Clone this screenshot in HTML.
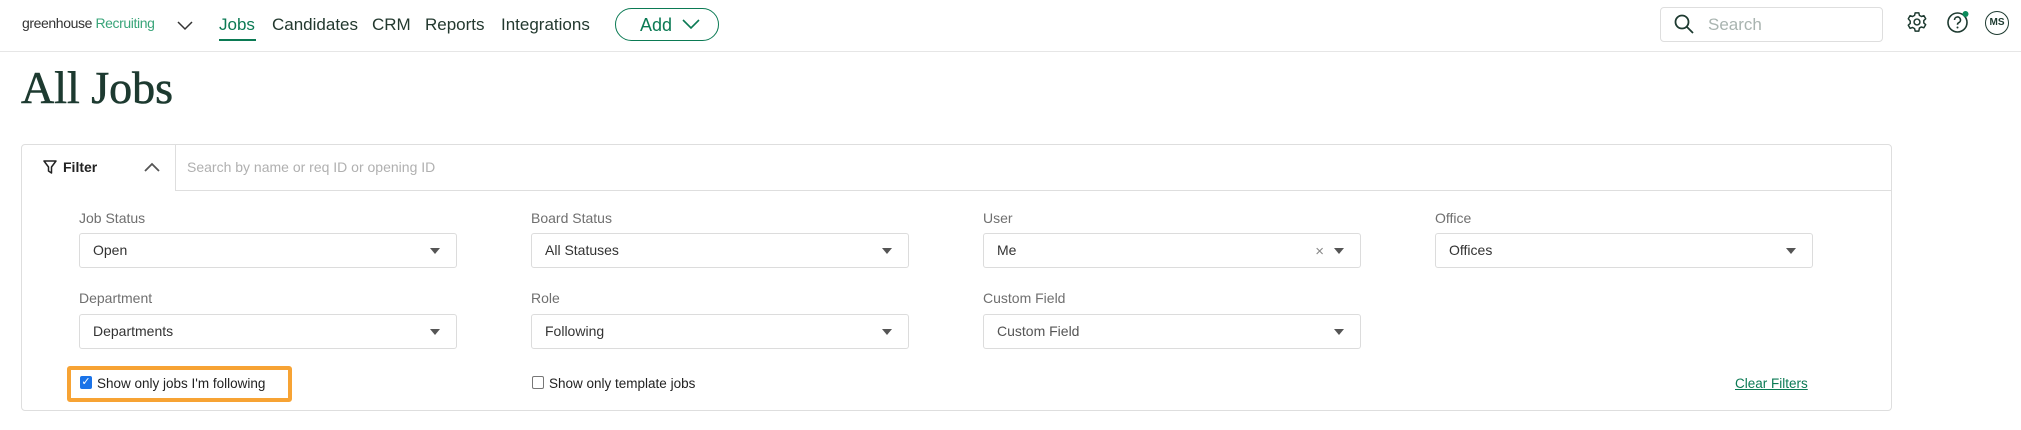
<!DOCTYPE html>
<html><head><meta charset="utf-8"><style>
*{box-sizing:border-box;margin:0;padding:0}
body{width:2021px;height:430px;background:#fff;font-family:"Liberation Sans",sans-serif;position:relative;overflow:hidden;color:#24352f}
.a{position:absolute;white-space:nowrap}
.nav{position:absolute;left:0;top:0;width:2021px;height:52px;border-bottom:1px solid #e6e6e6}
.nl{font-size:17px;color:#23392f;top:15px}
.lbl{font-size:14px;color:#6f6f6f}
.sel{position:absolute;height:35px;border:1px solid #dcdcdc;border-radius:3px;background:#fff;font-size:14px;color:#333;padding-left:13px;line-height:33px}
.sel .tri{position:absolute;right:16px;top:14px;width:0;height:0;border-left:5px solid transparent;border-right:5px solid transparent;border-top:6px solid #555}
</style></head><body>
<div class="nav"></div>
<div class="a" style="left:22px;top:15px;font-size:14px;color:#333;letter-spacing:-0.4px">greenhouse <span style="color:#3aa57a">Recruiting</span></div>
<svg class="a" style="left:177px;top:19px" width="16" height="12"><path d="M1 3l7 7 7-7" fill="none" stroke="#333" stroke-width="1.5"/></svg>
<div class="a nl" style="left:219px;color:#0b7a54">Jobs</div>
<div class="a" style="left:219px;top:39px;width:37px;height:2px;background:#0b7a54"></div>
<div class="a nl" style="left:272px">Candidates</div>
<div class="a nl" style="left:372px">CRM</div>
<div class="a nl" style="left:425px">Reports</div>
<div class="a nl" style="left:501px">Integrations</div>
<div class="a" style="left:615px;top:8px;width:104px;height:33px;border:1.5px solid #0b7a54;border-radius:17px;font-size:18px;color:#0b7a54;padding:6px 0 0 24px">Add</div>
<svg class="a" style="left:682px;top:18px" width="18" height="12"><path d="M1 2l8 8 8-8" fill="none" stroke="#0b7a54" stroke-width="1.6"/></svg>
<div class="a" style="left:1660px;top:7px;width:223px;height:35px;border:1px solid #dedede;border-radius:4px"></div>
<svg class="a" style="left:1673px;top:13px" width="22" height="22"><circle cx="9" cy="9" r="6.5" fill="none" stroke="#1d3a30" stroke-width="1.8"/><path d="M14 14l6 6" stroke="#1d3a30" stroke-width="1.8"/></svg>
<div class="a" style="left:1708px;top:15px;font-size:17px;color:#a9b4b0">Search</div>
<svg class="a" style="left:1906px;top:11px" width="22" height="22" viewBox="0 0 24 24"><path d="M10 2h4l.6 2.8 2.2 1.2 2.7-.9 2 3.4-2.1 1.9v2.6l2.1 1.9-2 3.4-2.7-.9-2.2 1.2L14 22h-4l-.6-2.8-2.2-1.2-2.7.9-2-3.4 2.1-1.9v-2.6L2.5 8.5l2-3.4 2.7.9 2.2-1.2z" fill="none" stroke="#1d3a30" stroke-width="1.6" stroke-linejoin="round"/><circle cx="12" cy="12" r="3.2" fill="none" stroke="#1d3a30" stroke-width="1.6"/></svg>
<svg class="a" style="left:1946px;top:10px" width="24" height="24"><circle cx="11.5" cy="12.5" r="9.5" fill="none" stroke="#1d3a30" stroke-width="1.6"/><path d="M8.5 10a3 3 0 1 1 4 2.8c-.8.4-1 1-1 2" fill="none" stroke="#1d3a30" stroke-width="1.6"/><circle cx="11.5" cy="17.5" r="1" fill="#1d3a30"/><circle cx="19.5" cy="4" r="3" fill="#0b8a5a"/></svg>
<div class="a" style="left:1985px;top:11px;width:24px;height:24px;border:1.5px solid #1d3a30;border-radius:50%;font-size:10px;font-weight:bold;text-align:center;line-height:21px;color:#1d3a30">MS</div>
<div class="a" style="left:21px;top:61px;font-family:'Liberation Serif',serif;font-size:46px;color:#1d3a30;-webkit-text-stroke:0.6px #1d3a30">All Jobs</div>
<div class="a" style="left:21px;top:144px;width:1871px;height:267px;border:1px solid #dedede;border-radius:4px"></div>
<div class="a" style="left:175px;top:144px;width:1717px;height:47px;border-bottom:1px solid #dedede;border-left:1px solid #dedede"></div>
<svg class="a" style="left:43px;top:160px" width="14" height="15"><path d="M1 1h12l-4.5 6v6l-3-2V7z" fill="none" stroke="#222" stroke-width="1.5" stroke-linejoin="round"/></svg>
<div class="a" style="left:63px;top:159px;font-size:14px;font-weight:bold;color:#222">Filter</div>
<svg class="a" style="left:143px;top:161px" width="18" height="12"><path d="M2 10l7-7 7 7" fill="none" stroke="#555" stroke-width="1.8"/></svg>
<div class="a" style="left:187px;top:159px;font-size:14px;color:#b0b0b0">Search by name or req ID or opening ID</div>
<div class="a lbl" style="left:79px;top:210px">Job Status</div>
<div class="a lbl" style="left:531px;top:210px">Board Status</div>
<div class="a lbl" style="left:983px;top:210px">User</div>
<div class="a lbl" style="left:1435px;top:210px">Office</div>
<div class="sel" style="left:79px;top:233px;width:378px">Open<span class="tri"></span></div>
<div class="sel" style="left:531px;top:233px;width:378px">All Statuses<span class="tri"></span></div>
<div class="sel" style="left:983px;top:233px;width:378px">Me<span style="position:absolute;right:36px;top:1px;color:#888;font-size:15px">×</span><span class="tri"></span></div>
<div class="sel" style="left:1435px;top:233px;width:378px">Offices<span class="tri"></span></div>
<div class="a lbl" style="left:79px;top:290px">Department</div>
<div class="a lbl" style="left:531px;top:290px">Role</div>
<div class="a lbl" style="left:983px;top:290px">Custom Field</div>
<div class="sel" style="left:79px;top:314px;width:378px">Departments<span class="tri"></span></div>
<div class="sel" style="left:531px;top:314px;width:378px">Following<span class="tri"></span></div>
<div class="sel" style="left:983px;top:314px;width:378px;color:#555">Custom Field<span class="tri"></span></div>
<div class="a" style="left:67px;top:366px;width:225px;height:36px;border:4px solid #f7a334;border-radius:3px"></div>
<div class="a" style="left:80px;top:376px;width:12px;height:13px;background:#1a73e8;border-radius:2px;color:#fff;font-size:11px;text-align:center;line-height:13px">✓</div>
<div class="a" style="left:97px;top:376px;font-size:13.5px;color:#222">Show only jobs I'm following</div>
<div class="a" style="left:532px;top:376px;width:12px;height:13px;border:1.5px solid #777;border-radius:2px"></div>
<div class="a" style="left:549px;top:376px;font-size:13.5px;color:#222">Show only template jobs</div>
<div class="a" style="left:1735px;top:376px;font-size:13.5px;color:#0b7a54;text-decoration:underline">Clear Filters</div>
</body></html>
